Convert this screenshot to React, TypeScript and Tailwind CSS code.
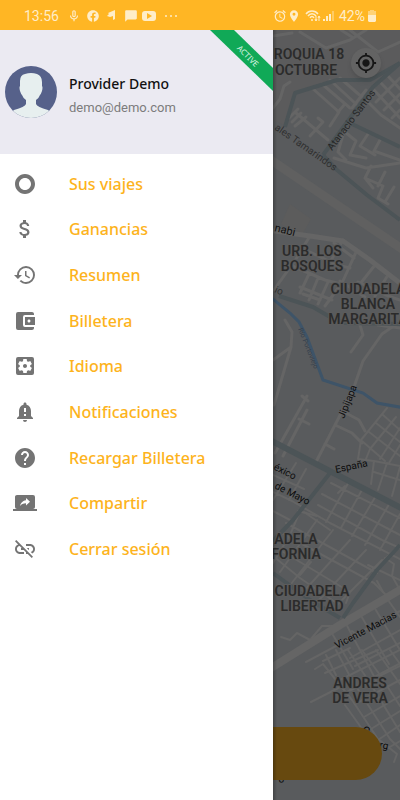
import React from "react";
import {
  MdAccountBalanceWallet,
  MdAlarm,
  MdAttachMoney,
  MdChatBubble,
  MdHelp,
  MdHistory,
  MdLinkOff,
  MdLocationOn,
  MdMyLocation,
  MdNotificationImportant,
  MdOutlineMicNone,
  MdScreenShare,
  MdSettingsApplications,
  MdTripOrigin,
} from "react-icons/md";
import { FaFacebook } from "react-icons/fa";

const menuItems = [
  { label: "Sus viajes", href: "#viajes", icon: MdTripOrigin },
  { label: "Ganancias", href: "#ganancias", icon: MdAttachMoney },
  { label: "Resumen", href: "#resumen", icon: MdHistory },
  { label: "Billetera", href: "#billetera", icon: MdAccountBalanceWallet },
  { label: "Idioma", href: "#idioma", icon: MdSettingsApplications },
  { label: "Notificaciones", href: "#notificaciones", icon: MdNotificationImportant },
  { label: "Recargar Billetera", href: "#recargar", icon: MdHelp },
  { label: "Compartir", href: "#compartir", icon: MdScreenShare },
  { label: "Cerrar sesión", href: "#salir", icon: MdLinkOff },
];

const streets = [
  // north
  "M273 36L292 33M273 108L280 99L284 86L290 82M300 32L326 48L350 40L366 30M350 30L378 52L400 42M341 30L352 37",
  "M296 113L328 140M289 118L298 109M292 122L301 113M295 126L306 117M310 136L323 122L318 118M312 88L339 112L330 126M322 84L350 108M330 80L356 104M340 78L363 98",
  "M338 112L345 104M352 108L366 90M374 90L400 118M381 83L400 103M388 76L400 89M376 102L400 78M384 110L400 94M392 118L400 110M366 100L381 115L400 128",
  "M343 135L338 152L346 160M345 132L356 141L350 155L366 158M368 134L360 146L375 155M380 140L374 151L400 160M334 158L366 168L400 163M371 166L365 178L373 188M365 178L383 186L378 198L388 204M385 172L378 186M394 187L385 202",
  // around Los Bosques
  "M310 236L296 259L274 290M343 240L330 262M357 250L342 283L325 306M290 265L325 280L345 285M310 252L337 265L350 268M334 243L354 258M300 287L332 300M309 274L300 293M318 278L309 300M328 282L318 304M303 294L320 300",
  "M358 282L388 296L400 300M375 265L360 284M388 275L375 296M340 281L365 297M378 325L400 328",
  // around Jipijapa
  "M285 320L292 332L291 347L274 405M291 347L273 360M307 396L275 453M307 410L283 456M302 396L308 401M299 419L309 424M398 323L382 334L363 361L353 390L316 462M360 325L363 335L351 352M344 412L359 420L365 431M335 425L352 433L362 443M325 444L334 449",
];

const blocks = [
  "M387 408L361 440L358 459L374 461L400 466M396 417L370 449L366 459M400 428L380 459M400 445L389 463M376 423L400 442M369 432L400 456M383 415L400 430M362 441L385 461M374 461L371 484M387 463L378 490M374 472L400 480M400 467L392 496",
  "M273 475L304 489M273 492L292 501L330 523L400 559M273 511L290 520M296 463L273 500M306 469L289 500M322 494L400 535M331 483L400 518M350 480L326 522M363 488L341 528M377 494L352 536M391 501L365 545M400 514L380 550M318 505L382 540L400 548M300 511L290 535L273 563M286 523L377 573M304 512L330 530M345 486L338 493",
  "M275 547L350 592L346 603M280 532L374 583M273 556L300 578L338 604M317 520L280 572M333 530L291 584M350 540L305 590M366 550L319 600M382 560L332 610M395 549L376 568M368 565L400 580M385 558L394 564L392 576L400 590M374 583L390 599M300 575L311 562M317 516L298 511",
  "M330 630L353 669M345 622L376 680M360 614L389 664M374 607L400 650M388 600L400 617M340 643L400 611M350 658L400 630M355 666L400 643M383 592L377 581M399 664L350 690M360 637L352 631M281 637L290 640L297 633L310 640L322 626L337 626",
  // Andrés de Vera
  "M306 662L336 646M315 669L323 664L352 700L378 739L397 754L394 762M323 661L350 648M326 655L336 675M336 650L352 680L390 739L400 749M348 650L370 683L400 732M362 650L380 675L400 706M376 650L400 684M390 650L400 664",
  "M311 702L350 682M340 680L400 650M347 692L400 666M355 704L400 680M364 717L400 696M371 729L400 711M378 740L400 725M388 748L400 741M325 673L343 665L378 650M345 705L365 733",
];

const trunks = [
  "M285 127L295 93L337 80L370 80L400 63",
  "M323 155L345 125L373 87L400 63",
  "M352 124L400 147",
  "M323 155L337 170L367 195L400 220",
  "M279 296L313 307L330 317L345 323L400 324",
  "M330 473L293 520L273 541",
  "M343 618L353 603L377 570L400 545",
  "M273 573L310 600L340 618",
];

const districts = [
  { x: 309, y: 59, lines: ["ROQUIA 18"] },
  { x: 306, y: 75, lines: ["OCTUBRE"] },
  { x: 312, y: 256, lines: ["URB. LOS", "BOSQUES"] },
  { x: 368, y: 294, lines: ["CIUDADELA", "BLANCA", "MARGARITA"] },
  { x: 296, y: 544, lines: ["ADELA", "FORNIA"] },
  { x: 312, y: 596, lines: ["CIUDADELA", "LIBERTAD"] },
  { x: 360, y: 688, lines: ["ANDRES", "DE VERA"] },
];

const streetLabels = [
  { text: "ales Tamarindos", x: 274, y: 129, angle: 35, size: 10, fill: "#303030" },
  { text: "Atanacio Santos", x: 332, y: 151, angle: -53, size: 10, fill: "#262626" },
  { text: "nabi", x: 274, y: 231, angle: 14, size: 11, fill: "#111111" },
  { text: "io", x: 274, y: 292, angle: 24, size: 10, fill: "#333333" },
  { text: "Río Portoviejo", x: 298, y: 329, angle: 68, size: 7, fill: "#36414d" },
  { text: "Jipijapa", x: 344, y: 419, angle: -68, size: 10, fill: "#0c0c0c" },
  { text: "España", x: 336, y: 473, angle: -12, size: 10, fill: "#0c0c0c" },
  { text: "éxico", x: 273, y: 469, angle: 27, size: 10, fill: "#0c0c0c" },
  { text: "de Mayo", x: 274, y: 488, angle: 27, size: 10, fill: "#0c0c0c" },
  { text: "Vicente Macias", x: 337, y: 649, angle: -28, size: 10, fill: "#0c0c0c" },
  { text: "C", x: 361, y: 732, angle: 30, size: 11, fill: "#0c0c0c" },
  { text: "rg", x: 379, y: 748, angle: 10, size: 10, fill: "#0c0c0c" },
  { text: "o", x: 279, y: 783, angle: -10, size: 10, fill: "#0c0c0c" },
];

const StreetMap = () => (
  <svg
    className="absolute inset-0 h-full w-full"
    viewBox="273 30 127 770"
    preserveAspectRatio="xMinYMin slice"
    role="img"
    aria-label="Mapa"
  >
    <rect x="273" y="30" width="400" height="770" fill="#595b5d" />
    <path d="M273 30H400V62L372 78L337 79L295 91L284 125L273 120Z" fill="#5b5b5c" />
    <path d="M290 204L311 219L302 235L281 224Z" fill="#5c5c5c" />
    <g fill="none" stroke="#656565" strokeLinecap="round" strokeLinejoin="round">
      <g strokeWidth="3">
        {streets.map((d) => (
          <path key={d} d={d} />
        ))}
      </g>
      <g strokeWidth="2">
        {blocks.map((d) => (
          <path key={d} d={d} />
        ))}
      </g>
      <path d="M268 158L405 251" stroke="#606060" strokeWidth="9" />
      <path d="M268 230L310 236L343 241L370 260L405 287" strokeWidth="5" />
      <path d="M268 670L340 625L405 587" strokeWidth="8" />
    </g>
    <g fill="none" stroke="#4c5457" strokeWidth="4" strokeLinejoin="round">
      {trunks.map((d) => (
        <path key={d} d={d} />
      ))}
      <path d="M268 439L405 510" strokeWidth="6" />
    </g>
    <path
      d="M268 295L290 313L299 322L307 337L323 380L363 393L377 403L405 408"
      fill="none"
      stroke="#3e5468"
      strokeWidth="3"
    />
    <g fontFamily="Roboto, sans-serif">
      {streetLabels.map((label) => (
        <text
          key={label.text}
          fontSize={label.size}
          fill={label.fill}
          transform={`translate(${label.x} ${label.y}) rotate(${label.angle})`}
        >
          {label.text}
        </text>
      ))}
      <g
        fontSize="14"
        fontWeight="600"
        textAnchor="middle"
        fill="#2b2b2b"
        stroke="#5c5c5c"
        strokeWidth="2"
        paintOrder="stroke"
      >
        {districts.map((district) =>
          district.lines.map((line, idx) => (
            <text key={`${district.y}-${line}`} x={district.x} y={district.y + idx * 15}>
              {line}
            </text>
          )),
        )}
      </g>
    </g>
  </svg>
);

const StatusBar = () => (
  <header className="flex h-[30px] items-center justify-between bg-[#ffb624] px-6 pt-px font-['Roboto',sans-serif] text-sm text-[#ffedc8]">
    <div className="flex items-center">
      <span className="w-[37px]">13:56</span>
      <MdOutlineMicNone className="ml-[6px]" size={14} />
      <FaFacebook className="ml-[6px]" size={12} />
      <svg className="ml-2" width="9" height="11" viewBox="0 0 9 11" fill="currentColor">
        <path d="M1 3L8 0V9L6 10V6L3 7L0 6L2 4Z" />
      </svg>
      <MdChatBubble className="ml-2" size={14} />
      <svg className="ml-1" width="14" height="10" viewBox="0 0 14 10">
        <rect width="14" height="10" rx="3" fill="currentColor" />
        <path d="M5 2L10 5L5 8Z" fill="#ffb624" />
      </svg>
      <svg className="ml-2" width="14" height="4" viewBox="0 0 14 4" fill="currentColor">
        <circle cx="2" cy="2" r="1" />
        <circle cx="7" cy="2" r="1" />
        <circle cx="12" cy="2" r="1" />
      </svg>
    </div>
    <div className="flex items-center">
      <MdAlarm size={14} />
      <MdLocationOn size={14} />
      <svg className="ml-1" width="16" height="12" viewBox="0 0 16 12" fill="none" stroke="currentColor">
        <path d="M1 4C4 0 10 0 13 4M3 6C5 3 9 3 11 6M5 8C6 6 8 6 9 8" strokeWidth="1.4" />
        <circle cx="7" cy="10" r="1" fill="currentColor" stroke="none" />
        <path d="M11 6V11M10 9L11 11L12 9M14 11V6M13 8L14 6L15 8" />
      </svg>
      <svg className="ml-[2px]" width="12" height="12" viewBox="0 0 12 12" fill="currentColor">
        <path d="M0 9H2V11H0ZM3 6H5V11H3ZM6 4H8V11H6Z" />
        <path d="M9 1H11V11H9Z" opacity="0.4" />
      </svg>
      <span className="ml-1">42%</span>
      <svg className="ml-[3px]" width="8" height="12" viewBox="0 0 8 12" fill="currentColor">
        <path d="M2 0H6V1H8V5H0V1H2Z" opacity="0.5" />
        <path d="M0 5H8V11L7 12H1L0 11Z" />
      </svg>
    </div>
  </header>
);

const Avatar = () => (
  <svg className="shrink-0" width="52" height="52" viewBox="0 0 52 52" role="img" aria-label="Foto de perfil">
    <defs>
      <clipPath id="avatar-clip">
        <circle cx="26" cy="26" r="26" />
      </clipPath>
    </defs>
    <g clipPath="url(#avatar-clip)">
      <rect width="52" height="52" fill="#56618a" />
      <path
        d="M20 8Q26 6 32 8Q37 10 37 16V20Q38 21 37 25Q36 28 35 29Q34 32 31 34V38Q32 41 43 44L52 52H0L9 44Q20 41 21 38V34Q18 32 17 29Q16 28 15 25Q14 21 15 20V15Q15 9 20 8Z"
        fill="#e7efef"
      />
    </g>
  </svg>
);

const Drawer = () => (
  <aside className="w-[273px] shrink-0 bg-white font-['Noto_Sans',sans-serif]">
    <div className="relative flex h-[124px] items-center gap-3 bg-[#ebeaf2] pl-[5px]">
      <Avatar />
      <div className="flex flex-col pt-[7px]">
        <span className="text-sm leading-6 font-medium text-[#111111]">Provider Demo</span>
        <span className="font-['Roboto',sans-serif] text-[13px] leading-6 text-[#7c7c7c]">
          demo@demo.com
        </span>
      </div>
      <svg className="absolute top-0 right-0" width="63" height="62" viewBox="0 0 63 62">
        <path d="M0 0H24L63 38V61Z" fill="#10a957" />
        <text
          transform="translate(38 26) rotate(45)"
          textAnchor="middle"
          fontFamily="Noto Sans, sans-serif"
          fontSize="8"
          fill="#d8f5e4"
          dy="3"
        >
          ACTIVE
        </text>
      </svg>
    </div>
    <nav className="mt-[7px]">
      <ul className="grid h-[411px] auto-rows-fr">
        {menuItems.map((item) => (
          <li key={item.label} className="flex">
            <a href={item.href} className="flex flex-1 items-center gap-8 pl-[13px]">
              <item.icon size={24} className="shrink-0 text-[#747474]" />
              <span className="text-base font-medium text-[#fdb31c]">{item.label}</span>
            </a>
          </li>
        ))}
      </ul>
    </nav>
  </aside>
);

export default function App() {
  return (
    <div className="flex min-h-screen flex-col">
      <StatusBar />
      <div className="flex flex-1">
        <Drawer />
        <main className="relative flex-1 overflow-hidden bg-[#595b5d]">
          <StreetMap />
          <button
            type="button"
            aria-label="Mi ubicación"
            className="absolute top-[18px] right-[19px] flex h-[30px] w-[30px] items-center justify-center rounded-full bg-[#636363] text-[#161616] shadow-md"
          >
            <MdMyLocation size={22} />
          </button>
          <button
            type="button"
            aria-label="Conectarse"
            className="absolute right-[18px] bottom-5 left-0 h-[53px] rounded-r-full bg-[#67490f]"
          />
          <div className="absolute inset-y-0 left-0 w-1 bg-linear-to-r from-black/25 to-transparent" />
        </main>
      </div>
    </div>
  );
}
